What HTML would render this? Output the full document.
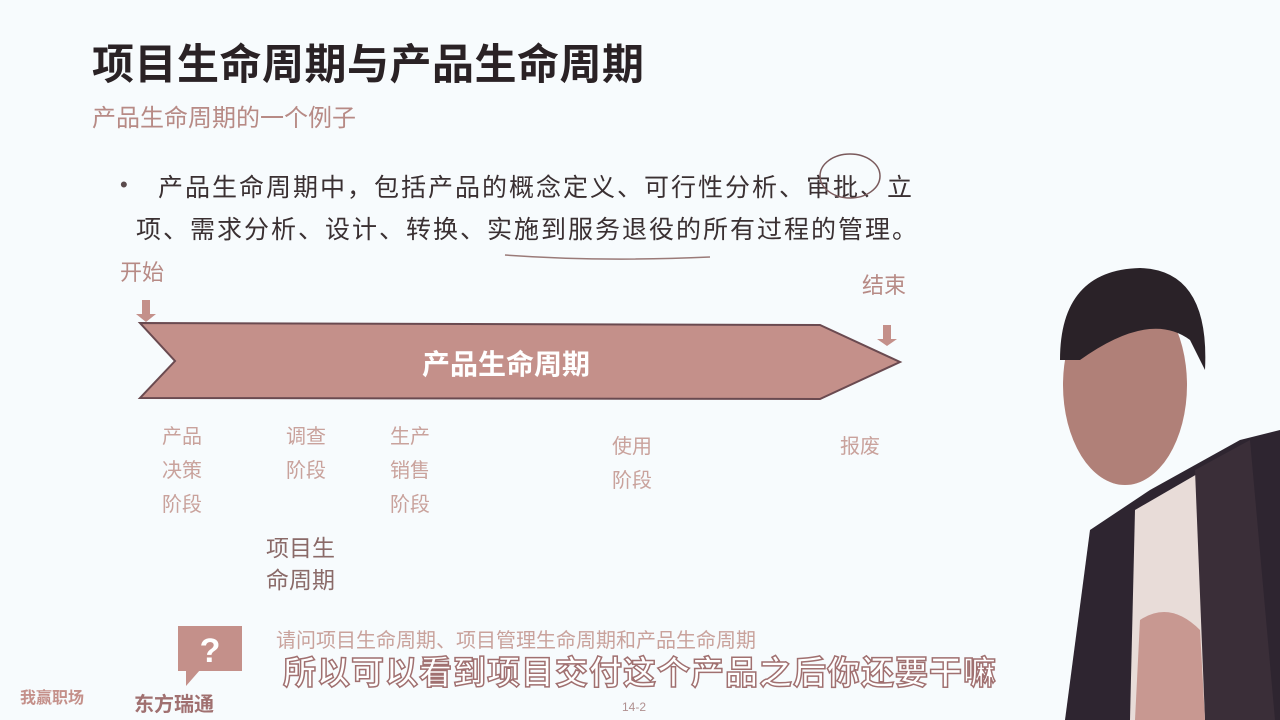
<!DOCTYPE html>
<html><head><meta charset="utf-8"><style>
body{margin:0;width:1280px;height:720px;background:#f7fbfd;position:relative;overflow:hidden;font-family:"Liberation Sans","Noto Sans CJK SC",sans-serif;}
.a{position:absolute;white-space:nowrap;}
.light{color:#c9a29c;font-size:20px;line-height:34px;}
</style></head><body>
<div class="a" style="left:92px;top:31px;font-size:42px;font-weight:bold;color:#2a2225;letter-spacing:0.5px;">项目生命周期与产品生命周期</div>
<div class="a" style="left:92px;top:98px;font-size:24px;color:#b78a85;">产品生命周期的一个例子</div>
<div class="a" style="left:120px;top:172px;font-size:22px;color:#5a4a4c;">•</div>
<div class="a" style="left:158px;top:167px;font-size:25px;color:#3a3032;line-height:42px;letter-spacing:2px;">产品生命周期中，包括产品的概念定义、可行性分析、审批、立<br><span style="margin-left:-22px">项、需求分析、设计、转换、实施到服务退役的所有过程的管理。</span></div>
<svg class="a" style="left:0;top:0" width="1280" height="720">
<ellipse cx="850" cy="176" rx="30" ry="22" fill="none" stroke="#7a5a5c" stroke-width="1.5"/>
<path d="M505 255 Q600 262 710 257" fill="none" stroke="#9a7a78" stroke-width="1.5"/>
<polygon points="140,323 820,325 900,362 820,399 140,398 175,361" fill="#c4908a" stroke="#6a4a50" stroke-width="2"/>
<rect x="142" y="300" width="8" height="14" fill="#c4908a"/><polygon points="136,314 156,314 146,322" fill="#c4908a"/>
<rect x="883" y="325" width="8" height="14" fill="#c4908a"/><polygon points="877,339 897,339 887,346" fill="#c4908a"/>
<rect x="178" y="626" width="64" height="45" fill="#c4908a"/><polygon points="186,670 200,670 186,686" fill="#c4908a"/>
<text x="210" y="662" font-size="34" font-weight="bold" fill="#fff" text-anchor="middle" font-family="Liberation Sans">?</text>
<path d="M1065 720 L1090 530 L1150 490 L1240 440 L1280 430 L1280 720Z" fill="#2e2530"/>
<path d="M1135 510 L1230 455 L1215 720 L1130 720Z" fill="#e8dcd8"/>
<path d="M1195 470 L1250 440 L1275 720 L1205 720Z" fill="#3a2e38"/>
<ellipse cx="1125" cy="385" rx="62" ry="100" fill="#b08078"/>
<path d="M1060 360 Q1060 270 1140 268 Q1210 270 1205 370 L1190 340 Q1150 310 1080 360Z" fill="#2a2228"/>
<path d="M1135 720 L1140 620 Q1170 600 1200 630 L1205 720Z" fill="#c4908a" opacity="0.9"/>
</svg>
<div class="a" style="left:120px;top:255px;font-size:22px;color:#b78a85;">开始</div>
<div class="a" style="left:862px;top:268px;font-size:22px;color:#b78a85;">结束</div>
<div class="a" style="left:422px;top:343px;font-size:28px;font-weight:bold;color:#fff;">产品生命周期</div>
<div class="a light" style="left:162px;top:420px;">产品<br>决策<br>阶段</div>
<div class="a light" style="left:286px;top:420px;">调查<br>阶段</div>
<div class="a light" style="left:390px;top:420px;">生产<br>销售<br>阶段</div>
<div class="a light" style="left:612px;top:430px;">使用<br>阶段</div>
<div class="a light" style="left:840px;top:430px;">报废</div>
<div class="a" style="left:266px;top:532px;font-size:23px;color:#8a6a68;line-height:32px;">项目生<br>命周期</div>
<div class="a" style="left:276px;top:624px;font-size:20px;color:#c9a29c;">请问项目生命周期、项目管理生命周期和产品生命周期</div>
<div class="a" style="left:283px;top:646px;font-size:33px;color:#fff;font-weight:bold;-webkit-text-stroke:1.5px #a07070;letter-spacing:1px;">所以可以看到项目交付这个产品之后你还要干嘛</div>
<div class="a" style="left:20px;top:684px;font-size:16px;color:#c4908a;font-weight:bold;">我赢职场</div>
<div class="a" style="left:134px;top:688px;font-size:20px;color:#a07070;font-weight:bold;">东方瑞通</div>
<div class="a" style="left:622px;top:700px;font-size:12px;color:#b09090;">14-2</div>
</body></html>
